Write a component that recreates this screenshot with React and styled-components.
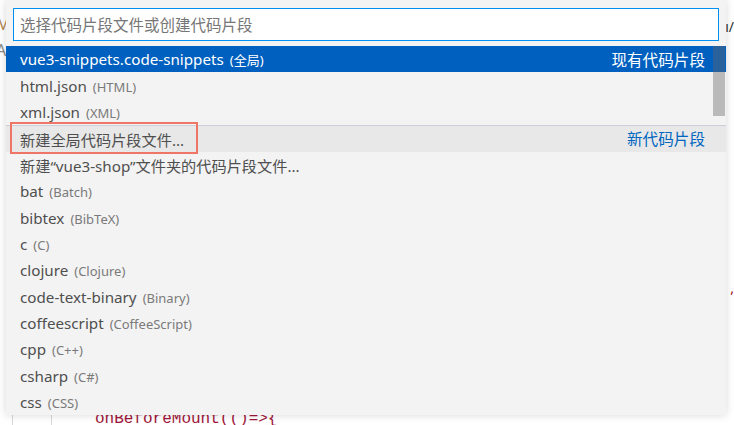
import React from "react";
import styled, { createGlobalStyle } from "styled-components";

const GlobalStyle = createGlobalStyle`
  html, body {
    margin: 0;
    padding: 0;
    background: #ffffff;
  }
  body {
    font-family: "Segoe UI", "Noto Sans", "Noto Sans CJK SC", sans-serif;
  }
`;

const items = [
  { label: "vue3-snippets.code-snippets", desc: "(全局)", right: "现有代码片段", selected: true },
  { label: "html.json", desc: "(HTML)" },
  { label: "xml.json", desc: "(XML)" },
  { label: "新建全局代码片段文件...", right: "新代码片段", separator: true, hovered: true, marked: true },
  { label: "新建“vue3-shop”文件夹的代码片段文件..." },
  { label: "bat", desc: "(Batch)" },
  { label: "bibtex", desc: "(BibTeX)" },
  { label: "c", desc: "(C)" },
  { label: "clojure", desc: "(Clojure)" },
  { label: "code-text-binary", desc: "(Binary)" },
  { label: "coffeescript", desc: "(CoffeeScript)" },
  { label: "cpp", desc: "(C++)" },
  { label: "csharp", desc: "(C#)" },
  { label: "css", desc: "(CSS)" },
];

function App() {
  return (
    <>
      <GlobalStyle />
      <Screen>
        <Editor>
          <SideLetters>
            <SideLetter $color="#b58a52">M</SideLetter>
            <SideLetter $color="#8a8a8a">A</SideLetter>
          </SideLetters>
          <Gutter />
          <CodeLine>onBeforeMount(()=&gt;{"{"}</CodeLine>
          <EdgeMark $top={17} $color="#333">ı/</EdgeMark>
          <EdgeMark $top={278} $color="#a31515">,</EdgeMark>
        </Editor>

        <Picker>
          <InputWrap>
            <Input placeholder="选择代码片段文件或创建代码片段" readOnly />
          </InputWrap>
          <List>
            {items.map((it, i) => (
              <Row
                key={i}
                $selected={it.selected}
                $hovered={it.hovered}
                $separator={it.separator}
              >
                <Label>
                  {it.label}
                  {it.desc && <Desc $selected={it.selected}>{it.desc}</Desc>}
                </Label>
                {it.right && <GroupLabel $selected={it.selected}>{it.right}</GroupLabel>}
                {it.marked && <Marker />}
              </Row>
            ))}
            <Thumb />
          </List>
        </Picker>
      </Screen>
    </>
  );
}

const Screen = styled.div`
  position: relative;
  width: 734px;
  height: 425px;
  overflow: hidden;
  background: #ffffff;
`;

const Editor = styled.div`
  position: relative;
  width: 100%;
  height: 100%;
`;

const SideLetters = styled.div`
  display: flex;
  flex-direction: column;
  gap: 4px;
  padding-top: 13px;
  margin-left: -4px;
`;

const SideLetter = styled.span`
  font-size: 16px;
  line-height: 22px;
  color: ${(p) => p.$color};
`;

const Gutter = styled.div`
  position: absolute;
  left: 12px;
  bottom: 0;
  width: 38px;
  height: 20px;
  border-left: 1px solid #d8d8d8;
  border-right: 1px solid #d8d8d8;
`;

const CodeLine = styled.div`
  position: absolute;
  left: 95px;
  top: 410px;
  font-family: "Liberation Mono", monospace;
  font-size: 16px;
  color: #a0163a;
`;

const EdgeMark = styled.div`
  position: absolute;
  right: 0;
  top: ${(p) => p.$top}px;
  font-size: 14px;
  color: ${(p) => p.$color};
`;

const Picker = styled.div`
  position: absolute;
  left: 6px;
  top: 0;
  width: 720px;
  height: 415px;
  background: #f3f3f3;
  box-shadow: 0 0 8px rgba(0, 0, 0, 0.16);
  display: flex;
  flex-direction: column;
`;

const InputWrap = styled.div`
  padding: 8px 7px 5px 7px;
`;

const Input = styled.input`
  box-sizing: border-box;
  width: 706px;
  height: 33px;
  border: 1px solid #0090f1;
  background: #ffffff;
  padding: 0 6px;
  font-family: "Segoe UI", "Noto Sans", "Noto Sans CJK SC", sans-serif;
  font-size: 15.5px;
  outline: none;
  &::placeholder {
    color: #767676;
  }
`;

const List = styled.div`
  position: relative;
  display: flex;
  flex-direction: column;
`;

const Row = styled.div`
  position: relative;
  box-sizing: border-box;
  height: 26.4px;
  display: flex;
  align-items: center;
  justify-content: space-between;
  padding: 0 21px 0 14px;
  font-size: 15.2px;
  white-space: nowrap;
  color: ${(p) => (p.$selected ? "#ffffff" : "#4f4f4f")};
  background: ${(p) =>
    p.$selected ? "#0060c0" : p.$hovered ? "#e8e8e8" : "transparent"};
  border-top: ${(p) => (p.$separator ? "1px solid #cccedb" : "none")};
`;

const Label = styled.span`
  display: flex;
  align-items: baseline;
`;

const Desc = styled.span`
  margin-left: 6px;
  font-size: 13px;
  color: ${(p) => (p.$selected ? "#ffffff" : "#7a7a7a")};
`;

const GroupLabel = styled.span`
  font-size: 15.6px;
  color: ${(p) => (p.$selected ? "#ffffff" : "#0066bf")};
`;

const Marker = styled.div`
  position: absolute;
  left: 4px;
  top: -4px;
  width: 188px;
  height: 32px;
  box-sizing: border-box;
  border: 2px solid #ef7566;
`;

const Thumb = styled.div`
  position: absolute;
  right: 1px;
  top: 0;
  width: 12px;
  height: 70px;
  background: rgba(100, 100, 100, 0.4);
`;

export default App;
